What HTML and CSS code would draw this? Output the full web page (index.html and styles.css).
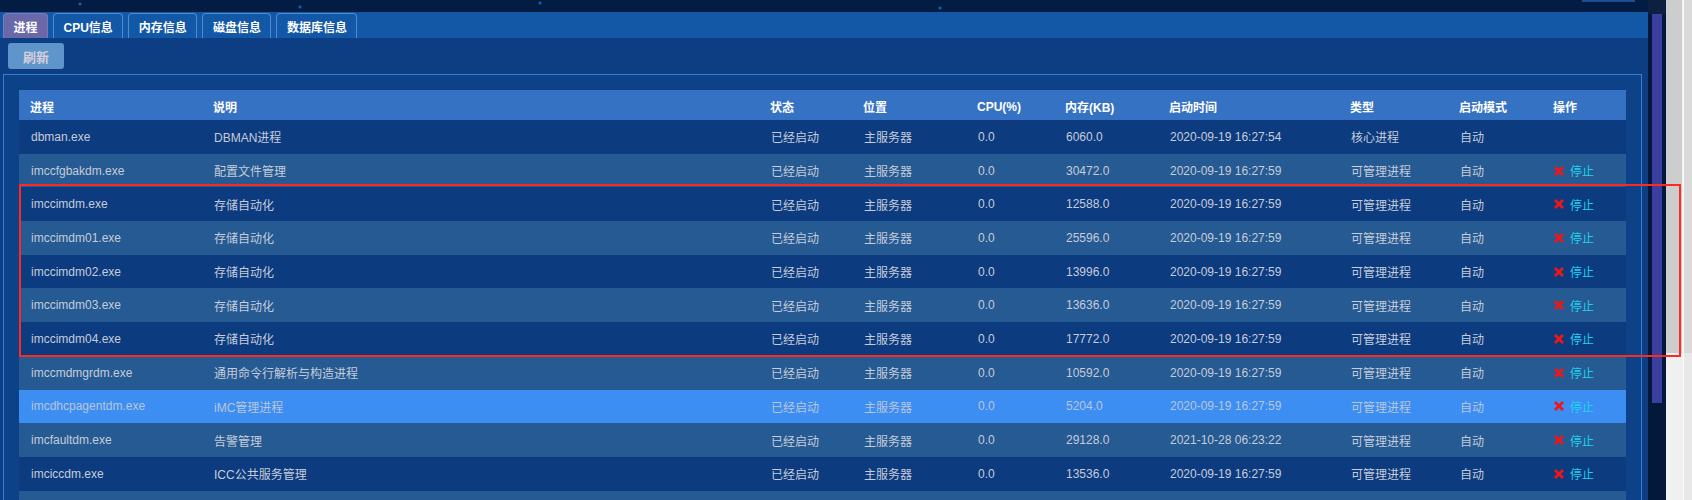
FILE: index.html
```html
<!DOCTYPE html>
<html lang="zh-CN">
<head>
    <meta charset="UTF-8">
    <title>进程信息</title>
    <link rel="stylesheet" href="styles.css">
</head>
<body>
<div class="page">
    <div class="frame">
        <div class="main">
            <div class="top-band"><div class="top-mark"></div></div>
            <div class="tabs">
                <div class="tab active">进程</div>
                <div class="tab">CPU信息</div>
                <div class="tab">内存信息</div>
                <div class="tab">磁盘信息</div>
                <div class="tab">数据库信息</div>
            </div>
            <div class="toolbar">
                <button class="btn-refresh">刷新</button>
            </div>
            <div class="panel">
                <table class="grid">
                    <colgroup>
                        <col class="c-name"><col class="c-desc"><col class="c-state"><col class="c-pos">
                        <col class="c-cpu"><col class="c-mem"><col class="c-time"><col class="c-type">
                        <col class="c-mode"><col class="c-op">
                    </colgroup>
                    <thead>
                        <tr>
                            <th>进程</th><th>说明</th><th>状态</th><th>位置</th><th>CPU(%)</th>
                            <th>内存(KB)</th><th>启动时间</th><th>类型</th><th>启动模式</th><th>操作</th>
                        </tr>
                    </thead>
                    <tbody>
                        <tr>
                            <td>dbman.exe</td><td>DBMAN进程</td><td>已经启动</td><td>主服务器</td><td>0.0</td>
                            <td>6060.0</td><td>2020-09-19 16:27:54</td><td>核心进程</td><td>自动</td><td></td>
                        </tr>
                        <tr>
                            <td>imccfgbakdm.exe</td><td>配置文件管理</td><td>已经启动</td><td>主服务器</td><td>0.0</td>
                            <td>30472.0</td><td>2020-09-19 16:27:59</td><td>可管理进程</td><td>自动</td>
                            <td><a class="stop"><svg class="x" viewBox="0 0 10 10"><path d="M1 1L9 9M9 1L1 9"/></svg>停止</a></td>
                        </tr>
                        <tr>
                            <td>imccimdm.exe</td><td>存储自动化</td><td>已经启动</td><td>主服务器</td><td>0.0</td>
                            <td>12588.0</td><td>2020-09-19 16:27:59</td><td>可管理进程</td><td>自动</td>
                            <td><a class="stop"><svg class="x" viewBox="0 0 10 10"><path d="M1 1L9 9M9 1L1 9"/></svg>停止</a></td>
                        </tr>
                        <tr>
                            <td>imccimdm01.exe</td><td>存储自动化</td><td>已经启动</td><td>主服务器</td><td>0.0</td>
                            <td>25596.0</td><td>2020-09-19 16:27:59</td><td>可管理进程</td><td>自动</td>
                            <td><a class="stop"><svg class="x" viewBox="0 0 10 10"><path d="M1 1L9 9M9 1L1 9"/></svg>停止</a></td>
                        </tr>
                        <tr>
                            <td>imccimdm02.exe</td><td>存储自动化</td><td>已经启动</td><td>主服务器</td><td>0.0</td>
                            <td>13996.0</td><td>2020-09-19 16:27:59</td><td>可管理进程</td><td>自动</td>
                            <td><a class="stop"><svg class="x" viewBox="0 0 10 10"><path d="M1 1L9 9M9 1L1 9"/></svg>停止</a></td>
                        </tr>
                        <tr>
                            <td>imccimdm03.exe</td><td>存储自动化</td><td>已经启动</td><td>主服务器</td><td>0.0</td>
                            <td>13636.0</td><td>2020-09-19 16:27:59</td><td>可管理进程</td><td>自动</td>
                            <td><a class="stop"><svg class="x" viewBox="0 0 10 10"><path d="M1 1L9 9M9 1L1 9"/></svg>停止</a></td>
                        </tr>
                        <tr>
                            <td>imccimdm04.exe</td><td>存储自动化</td><td>已经启动</td><td>主服务器</td><td>0.0</td>
                            <td>17772.0</td><td>2020-09-19 16:27:59</td><td>可管理进程</td><td>自动</td>
                            <td><a class="stop"><svg class="x" viewBox="0 0 10 10"><path d="M1 1L9 9M9 1L1 9"/></svg>停止</a></td>
                        </tr>
                        <tr>
                            <td>imccmdmgrdm.exe</td><td>通用命令行解析与构造进程</td><td>已经启动</td><td>主服务器</td><td>0.0</td>
                            <td>10592.0</td><td>2020-09-19 16:27:59</td><td>可管理进程</td><td>自动</td>
                            <td><a class="stop"><svg class="x" viewBox="0 0 10 10"><path d="M1 1L9 9M9 1L1 9"/></svg>停止</a></td>
                        </tr>
                        <tr class="hover">
                            <td>imcdhcpagentdm.exe</td><td>iMC管理进程</td><td>已经启动</td><td>主服务器</td><td>0.0</td>
                            <td>5204.0</td><td>2020-09-19 16:27:59</td><td>可管理进程</td><td>自动</td>
                            <td><a class="stop"><svg class="x" viewBox="0 0 10 10"><path d="M1 1L9 9M9 1L1 9"/></svg>停止</a></td>
                        </tr>
                        <tr>
                            <td>imcfaultdm.exe</td><td>告警管理</td><td>已经启动</td><td>主服务器</td><td>0.0</td>
                            <td>29128.0</td><td>2021-10-28 06:23:22</td><td>可管理进程</td><td>自动</td>
                            <td><a class="stop"><svg class="x" viewBox="0 0 10 10"><path d="M1 1L9 9M9 1L1 9"/></svg>停止</a></td>
                        </tr>
                        <tr>
                            <td>imciccdm.exe</td><td>ICC公共服务管理</td><td>已经启动</td><td>主服务器</td><td>0.0</td>
                            <td>13536.0</td><td>2020-09-19 16:27:59</td><td>可管理进程</td><td>自动</td>
                            <td><a class="stop"><svg class="x" viewBox="0 0 10 10"><path d="M1 1L9 9M9 1L1 9"/></svg>停止</a></td>
                        </tr>
                        <tr>
                            <td></td><td></td><td></td><td></td><td></td><td></td><td></td><td></td><td></td><td></td>
                        </tr>
                    </tbody>
                </table>
            </div>
        </div>
        <div class="inner-scroll"><div class="inner-thumb"></div></div>
    </div>
    <div class="browser-scroll">
        <div class="browser-thumb"></div>
        <div class="browser-edge"></div>
    </div>
    <div class="annotation"></div>
</div>
</body>
</html>
```

FILE: styles.css
```css
html, body {
    margin: 0;
    height: 500px;
    overflow: hidden;
}
body {
    font-family: "Liberation Sans", "Noto Sans CJK SC", sans-serif;
    font-size: 12px;
    background: #021b42;
}
.page {
    position: relative;
    display: flex;
    height: 500px;
    overflow: hidden;
}
.frame {
    flex: 1;
    display: flex;
    background: #021c44;
}
.main {
    flex: 1;
    display: flex;
    flex-direction: column;
    background: #0d3d82;
}
.top-band {
    flex-shrink: 0;
    height: 12px;
    display: flex;
    background:
        radial-gradient(circle at 80px 4px, #1c5aa6 1px, transparent 2px),
        radial-gradient(circle at 300px 7px, #1c5aa6 1px, transparent 2px),
        radial-gradient(circle at 540px 3px, #1c5aa6 1px, transparent 2px),
        radial-gradient(circle at 940px 8px, #1c5aa6 1px, transparent 2px),
        linear-gradient(160deg, transparent 620px, rgba(30,100,200,0.4) 650px, transparent 680px),
        #021c44;
}
.top-mark {
    width: 53px;
    height: 2px;
    margin-left: auto;
    margin-right: 13px;
    background: #1d4f8f;
}
.tabs {
    flex-shrink: 0;
    height: 26px;
    box-sizing: border-box;
    padding: 1px 0 0 3px;
    display: flex;
    gap: 5px;
    background: #1357a7;
}
.tab {
    padding: 0 9.5px;
    border: 1px solid #4c8cd2;
    border-bottom: none;
    border-radius: 4px 4px 0 0;
    color: #fff;
    font-weight: bold;
    display: flex;
    align-items: center;
}
.tab.active {
    background: #6a68a8;
    border-color: #7a78b8;
}
.toolbar {
    flex-shrink: 0;
    height: 36px;
    box-sizing: border-box;
    padding: 5px 8px;
}
.btn-refresh {
    width: 56px;
    height: 26px;
    border: none;
    border-radius: 3px;
    background: #5e95cb;
    color: #d6d0dc;
    font-family: inherit;
    font-size: 13px;
    font-weight: bold;
    padding: 0;
}
.panel {
    flex: 1 0 auto;
    margin: 0 6px 0 3px;
    padding: 15px;
    border: 1px solid #2f7fd6;
    border-bottom: none;
    background: #0e4288;
}
.grid {
    width: 100%;
    table-layout: fixed;
    border-collapse: collapse;
}
.c-name { width: 183px; }
.c-desc { width: 557px; }
.c-state { width: 93px; }
.c-pos { width: 114px; }
.c-cpu { width: 88px; }
.c-mem { width: 104px; }
.c-time { width: 181px; }
.c-type { width: 109px; }
.c-mode { width: 94px; }
.c-op { width: 84px; }
.grid th {
    height: 30px;
    box-sizing: border-box;
    padding: 3px 0 0 11px;
    text-align: left;
    color: #fff;
    font-weight: bold;
    background: #3572c4;
    white-space: nowrap;
}
.grid td {
    height: 33.7px;
    box-sizing: border-box;
    padding: 0 0 0 12px;
    color: #c6ccd8;
    white-space: nowrap;
    vertical-align: middle;
}
.grid tbody tr {
    background: #0c3b80;
}
.grid tbody tr:nth-child(even) {
    background: #255a93;
}
.grid tbody tr.hover {
    background: #3d8ef2;
}
.grid tbody tr.hover td {
    color: #b8c6dc;
}
.stop {
    display: inline-flex;
    align-items: center;
    color: #1ed2ee;
}
.x {
    width: 10px;
    height: 10px;
    margin-right: 6px;
    stroke: #f01616;
    stroke-width: 2.8;
    fill: none;
}
.inner-scroll {
    width: 10px;
    padding: 14px 4px 0;
    background: linear-gradient(#0e2042 14px, #04183c 14px);
}
.inner-thumb {
    height: 389px;
    background: #3b3fa0;
}
.browser-scroll {
    width: 26px;
    display: flex;
    background: #f0f0f0;
}
.browser-thumb {
    width: 16px;
    height: 353px;
    background: #cdcdcd;
}
.browser-edge {
    flex: 1;
    margin-left: 1px;
    border-left: 1px solid #fbfbfb;
    background: linear-gradient(#dadada 353px, #e8e8e8 353px);
}
.annotation {
    position: absolute;
    left: 19px;
    top: 184px;
    width: 1662px;
    height: 173px;
    box-sizing: border-box;
    border: 2px solid #ff2a1f;
}
```
